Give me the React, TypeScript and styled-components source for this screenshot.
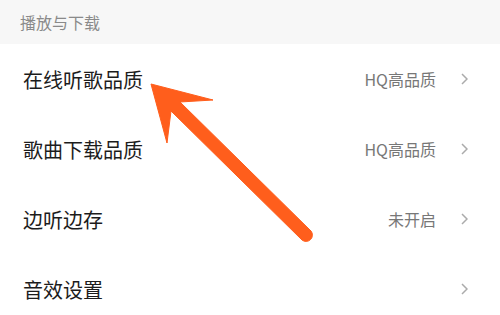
import styled, { createGlobalStyle } from "styled-components"

const GlobalStyle = createGlobalStyle`
  html, body {
    margin: 0;
    padding: 0;
    background: #ffffff;
    font-family: "Noto Sans CJK SC", "Noto Sans", sans-serif;
  }
`

const Page = styled.div`
  position: relative;
  width: 500px;
  height: 315px;
  overflow: hidden;
  background: #ffffff;
`

const SectionHeader = styled.div`
  height: 44px;
  display: flex;
  align-items: center;
  padding-left: 20px;
  background: #f7f7f7;
  color: #8a8a8a;
  font-size: 16px;
`

const Row = styled.div`
  height: 70px;
  display: flex;
  align-items: center;
  padding: 0 32px 0 23px;
`

const Title = styled.div`
  flex-grow: 1;
  font-size: 20px;
  color: #1c1c1c;
`

const Value = styled.div`
  font-size: 16px;
  color: #777777;
  margin-right: 25px;
`

const Chevron = styled.svg`
  width: 7px;
  height: 12px;
  flex-shrink: 0;
`

const Arrow = styled.svg`
  position: absolute;
  left: 0;
  top: 0;
  width: 500px;
  height: 315px;
  pointer-events: none;
`

type Item = {
  title: string
  value?: string
}

const items: Item[] = [
  { title: "在线听歌品质", value: "HQ高品质" },
  { title: "歌曲下载品质", value: "HQ高品质" },
  { title: "边听边存", value: "未开启" },
  { title: "音效设置" },
]

export default function App() {
  return (
    <>
      <GlobalStyle />
      <Page>
        <SectionHeader>播放与下载</SectionHeader>
        {items.map(v => (
          <Row key={v.title}>
            <Title>{v.title}</Title>
            {v.value && <Value>{v.value}</Value>}
            <Chevron viewBox="0 0 7 12">
              <polyline points="1,1 6,6 1,11" fill="none" stroke="#ababab" strokeWidth="1.5" />
            </Chevron>
          </Row>
        ))}
        <Arrow viewBox="0 0 500 315">
          <path
            d="M151,84 L213,100 L180,102 L311,231 A6.4,6.4 0 0 1 302,240 L171,111 L167,143 Z"
            fill="#ff5e1c"
            stroke="#ff5e1c"
            strokeWidth="1"
            strokeLinejoin="round"
          />
        </Arrow>
      </Page>
    </>
  )
}
